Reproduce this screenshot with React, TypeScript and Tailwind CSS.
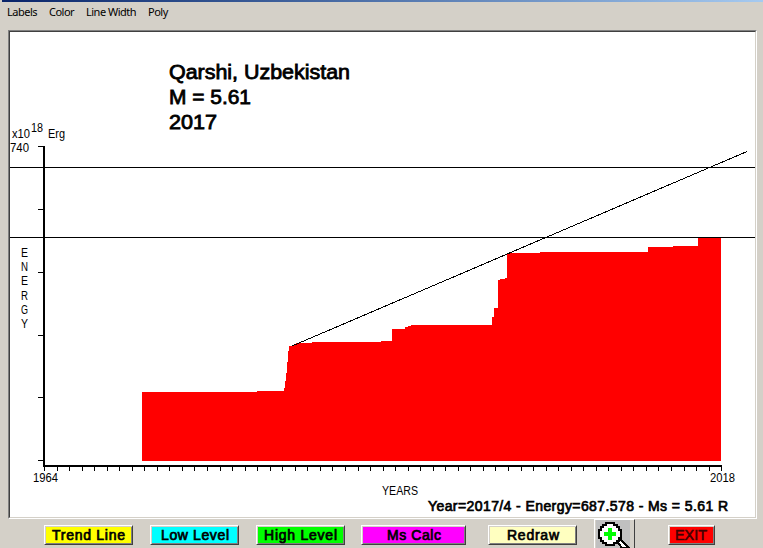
import clsx from 'clsx';

const menuItems = [
    { label: 'Labels', width: 'w-[42px]' },
    { label: 'Color', width: 'w-[37px]' },
    { label: 'Line Width', width: 'w-[62px]' },
    { label: 'Poly', width: 'w-[30px]' },
];

const buttons = [
    { label: 'Trend Line', textWidth: 73, className: 'w-[89px] bg-[#ffff00]' },
    { label: 'Low Level', textWidth: 68, className: 'w-[89px] ml-[17px] bg-[#00ffff]' },
    { label: 'High Level', textWidth: 73, className: 'w-[89px] ml-[17px] bg-[#00ff00]' },
    { label: 'Ms Calc', textWidth: 54, className: 'w-[105px] ml-[16px] bg-[#ff00ff]' },
    { label: 'Redraw', textWidth: 52, className: 'w-[89px] ml-[22px] bg-[#ffffc0]' },
];

// Cumulative energy outline, in chart pixels
const energy =
    'M142 461V392H257V391H284L286 378L289 346H293L297 343H312V342H381V341H392V329H405V327H408V326H411V325H492V317H494V308H498V280H500V279H505V278H507V253H540V252H648V247H673V246H698V238H721V461Z';

const yTicks = [146, 209, 272, 335, 397, 460];
const xTicks = Array.from({ length: 55 }, (_, i) => Math.round(44 + i * 12.54));

const Button = ({ label, textWidth, className }: { label: string; textWidth: number; className: string }) => (
    <button
        className={clsx(
            'h-5 shrink-0 border border-t-white border-l-white border-r-[#404040] border-b-[#404040]',
            'shadow-[inset_1px_1px_0_#d4d0c8,inset_-1px_-1px_0_#808080]',
            className
        )}
    >
        <svg width={textWidth} height="18" className="mx-auto block overflow-visible">
            <text x="0" y="14" textLength={textWidth} className="stroke-black stroke-[0.7px] text-[14px]">
                {label}
            </text>
        </svg>
    </button>
);

const EnergyChart = () => (
    <svg width="745" height="485" viewBox="10 32 745 485" className="block" shapeRendering="crispEdges">
        <g className="stroke-black stroke-[0.8px] text-[20px]">
            <text x="169" y="79" textLength="181" lengthAdjust="spacingAndGlyphs">Qarshi, Uzbekistan</text>
            <text x="169" y="104" textLength="82" lengthAdjust="spacingAndGlyphs">M = 5.61</text>
            <text x="169" y="129" textLength="48" lengthAdjust="spacingAndGlyphs">2017</text>
        </g>

        <path d={energy} fill="#ff0000" />

        {/* High and low levels */}
        <path d="M10 167.5H755M10 237.5H755" stroke="#000" />
        <line x1="292" y1="346" x2="747" y2="151.5" stroke="#000" />

        {/* Axes */}
        <rect x="43" y="146" width="2" height="321" />
        <rect x="43" y="465" width="679" height="2" />
        {yTicks.map((y) => (
            <rect key={y} x="38" y={y} width="5" height="1" />
        ))}
        {xTicks.map((x) => (
            <rect key={x} x={x} y="467" width="1" height="4" />
        ))}

        <g className="text-[12.5px]">
            <text x="12" y="138" textLength="18" lengthAdjust="spacingAndGlyphs">x10</text>
            <text x="31" y="132" textLength="12" lengthAdjust="spacingAndGlyphs">18</text>
            <text x="48" y="138" textLength="17" lengthAdjust="spacingAndGlyphs">Erg</text>
            <text x="10" y="152" textLength="19" lengthAdjust="spacingAndGlyphs">740</text>
            {'ENERGY'.split('').map((letter, i) => (
                <text key={i} x="21" y={257 + Math.round(i * 14.2)} textLength="7" lengthAdjust="spacingAndGlyphs">{letter}</text>
            ))}
            <text x="33" y="482" textLength="25" lengthAdjust="spacingAndGlyphs">1964</text>
            <text x="710" y="482" textLength="25" lengthAdjust="spacingAndGlyphs">2018</text>
            <text x="382" y="495" textLength="36" lengthAdjust="spacingAndGlyphs">YEARS</text>
        </g>
        <text x="428" y="511" textLength="300" className="stroke-black stroke-[0.7px] text-[14px]">
            Year=2017/4 - Energy=687.578 - Ms = 5.61 R
        </text>
    </svg>
);

const ZoomButton = () => (
    <button className="ml-[17px] -mt-[6px] h-[29px] w-[41px] shrink-0 border-t border-l border-r border-t-white border-l-white border-r-[#404040] bg-[#c0c0c0] shadow-[inset_1px_0_0_#d4d0c8,inset_-4px_0_0_#d4d0c8]">
        <svg width="39" height="28" viewBox="595 520 39 28" className="block" shapeRendering="crispEdges">
            <path d="M617 541l3-2 9 9h-7z" fill="#fff" stroke="#000" strokeWidth="2" />
            <path
                d="M606 523h8v2h3v2h2v3h2v8h-2v3h-2v2h-3v2h-8v-2h-3v-2h-2v-3h-2v-8h2v-3h2v-2h3z"
                fill="#fff"
                stroke="#000"
                strokeWidth="2"
            />
            <path d="M604 534h12M610 528v12" stroke="#00ff00" strokeWidth="4" />
        </svg>
    </button>
);

export default function App() {
    return (
        <div className="flex h-[548px] w-[763px] flex-col overflow-hidden bg-[#d4d0c8] font-['Liberation_Sans',Arial,sans-serif] text-black">
            <div className="ml-[2px] h-[2px] shrink-0 bg-linear-to-r from-[#0a246a] to-[#a6caf0]" />

            <nav className="flex h-7 shrink-0 gap-0 pt-[2px] pl-[7px]">
                {menuItems.map((item) => (
                    <span key={item.label} className={clsx('text-[11px] leading-4 whitespace-nowrap font-["Noto_Sans",sans-serif] tracking-[-0.5px]', item.width)}>
                        {item.label}
                    </span>
                ))}
            </nav>

            <main className="ml-2 h-[489px] w-[749px] shrink-0 border border-t-[#808080] border-l-[#808080] border-r-white border-b-white bg-white">
                <div className="h-[487px] w-[747px] border border-t-[#404040] border-l-[#404040] border-r-[#d4d0c8] border-b-[#d4d0c8]">
                    <EnergyChart />
                </div>
            </main>

            <footer className="flex h-[29px] shrink-0 items-start pt-[6px] pl-11">
                {buttons.map((button) => (
                    <Button key={button.label} {...button} />
                ))}
                <ZoomButton />
                <button className="ml-[33px] h-5 w-[47px] shrink-0 border border-t-white border-l-white border-r-[#404040] border-b-[#404040] bg-[#ff0000] shadow-[inset_1px_1px_0_#d4d0c8,inset_-1px_-1px_0_#808080]">
                    <svg width="33" height="18" className="mx-auto block overflow-visible">
                        <text x="0" y="14" textLength="32" lengthAdjust="spacingAndGlyphs" className="fill-[#400000] stroke-[#400000] stroke-[0.5px] text-[14px]">
                            EXIT
                        </text>
                    </svg>
                </button>
            </footer>
        </div>
    );
}
